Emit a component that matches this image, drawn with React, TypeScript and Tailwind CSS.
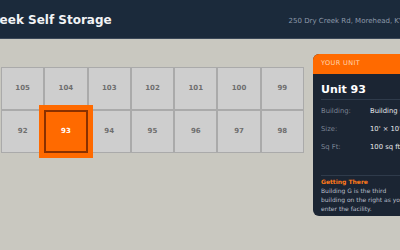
import React from "react";

const top = [105, 104, 103, 102, 101, 100, 99];
const bottom = [92, 93, 94, 95, 96, 97, 98];

function Cell({ n }: { n: number }) {
  if (n === 93) {
    return (
      <div className="relative z-10 h-[43px] flex items-center justify-center bg-[#ff6a00] border-2 border-[#8a3100] shadow-[0_0_0_5px_#ff6a00] text-white font-bold text-[7px]">
        {n}
      </div>
    );
  }
  return (
    <div className="h-[43px] flex items-center justify-center bg-[#cecece] border border-[#aaaaaa] text-[#6e6e6e] font-bold text-[7px]">
      {n}
    </div>
  );
}

export default function App() {
  return (
    <div
      className="w-[400px] h-[250px] overflow-hidden bg-[#c9c8c0]"
      style={{ fontFamily: '"DejaVu Sans", sans-serif' }}
    >
      <header className="h-[39px] bg-[#1b2a3b] border-b border-[#3a4757] flex items-center justify-between">
        <div className="-ml-[43px] pt-[2px] text-[12px] font-bold text-[#f1f3f5] whitespace-nowrap">
          Dry Creek Self Storage
        </div>
        <div className="-mr-[3px] pt-[5px] text-[7px] text-[#8d99aa] whitespace-nowrap">
          250 Dry Creek Rd, Morehead, KY
        </div>
      </header>
      <main className="flex pt-[15px]">
        <div className="shrink-0 pl-[1px] pt-[13px]">
          <div className="grid grid-cols-7 w-[303px]">
            {top.map((n) => (
              <Cell key={n} n={n} />
            ))}
            {bottom.map((n) => (
              <Cell key={n} n={n} />
            ))}
          </div>
        </div>
        <aside className="shrink-0 ml-[9px] w-[104px] rounded-l-[6px] overflow-hidden bg-[#1b2533]">
          <div className="h-[20px] bg-[#ff6a00] px-2 flex items-center text-[6.5px] tracking-[0.4px] text-[#ffd6b3] uppercase">
            Your Unit
          </div>
          <div className="px-2 pb-[3px]">
            <div className="pt-[9px] pb-[3px] border-b border-[#2f3b4b] text-[11px] leading-[13px] font-bold text-white whitespace-nowrap">
              Unit 93
            </div>
            <div className="mt-[2px] text-[6.8px] whitespace-nowrap">
              <div className="h-[18px] flex items-center">
                <span className="w-[49px] text-[#7b8494]">Building:</span>
                <span className="text-[#e6e8eb]">Building G</span>
              </div>
              <div className="h-[18px] flex items-center">
                <span className="w-[49px] text-[#7b8494]">Size:</span>
                <span className="text-[#e6e8eb]">10' × 10'</span>
              </div>
              <div className="h-[18px] flex items-center">
                <span className="w-[49px] text-[#7b8494]">Sq Ft:</span>
                <span className="text-[#e6e8eb]">100 sq ft</span>
              </div>
            </div>
            <div className="mt-[19px] border-t border-[#2f3b4b] pt-[1px]">
              <div className="text-[6px] leading-[9px] font-bold text-[#ff7a1a]">
                Getting There
              </div>
              <div className="text-[6px] leading-[9px] text-[#b9bfc9]">
                Building G is the third building on the right as you enter the facility.
              </div>
            </div>
          </div>
        </aside>
      </main>
    </div>
  );
}
